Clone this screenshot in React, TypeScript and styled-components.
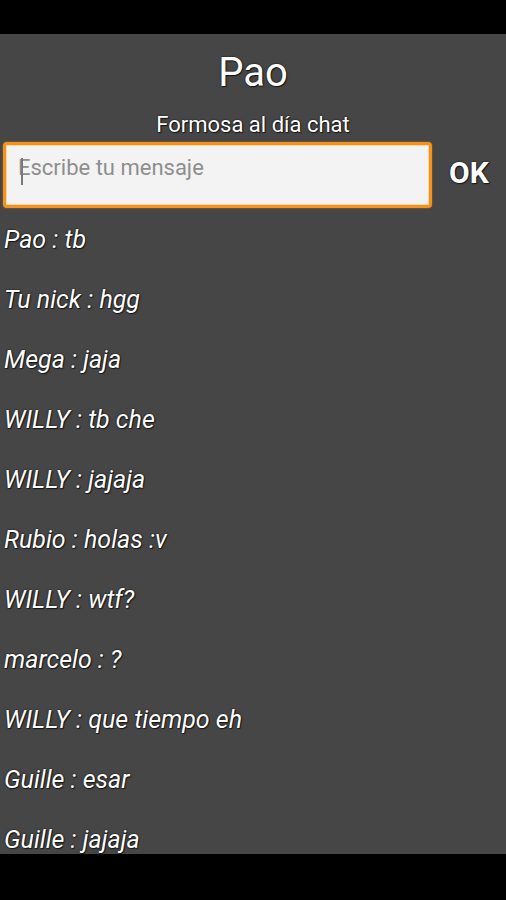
import * as React from "react";
import styled, { createGlobalStyle } from "styled-components";

const GlobalStyle = createGlobalStyle`
  html, body {
    margin: 0;
    padding: 0;
    background: #000;
  }
  * {
    box-sizing: border-box;
  }
`;

const Screen = styled.div`
  width: 506px;
  height: 900px;
  display: flex;
  flex-direction: column;
  background: #000;
  font-family: Roboto, "Noto Sans", sans-serif;
  overflow: hidden;
`;

const StatusBar = styled.div`
  height: 34px;
  flex: none;
  background: #000;
`;

const NavBar = styled.div`
  height: 46px;
  flex: none;
  background: #000;
`;

const Content = styled.main`
  flex: 1;
  background: #464646;
  display: flex;
  flex-direction: column;
  overflow: hidden;
  color: #fff;
  text-shadow: 0 0 2px rgba(0, 0, 0, 0.9), 1px 1px 1px rgba(0, 0, 0, 0.6);
`;

const Title = styled.h1`
  margin: 19px 0 0;
  font-size: 40px;
  line-height: 40px;
  font-weight: 400;
  text-align: center;
`;

const Subtitle = styled.h2`
  margin: 21px 0 0;
  font-size: 22px;
  line-height: 22px;
  font-weight: 400;
  text-align: center;
`;

const Composer = styled.form`
  margin: 6px 0 0 3px;
  display: flex;
  align-items: center;
`;

const InputWrap = styled.div`
  position: relative;
  width: 429px;
  height: 66px;
`;

const MessageInput = styled.textarea`
  width: 100%;
  height: 100%;
  resize: none;
  border: 3px solid #f5921e;
  border-radius: 4px;
  background: #f3f3f3;
  box-shadow: inset 0 0 0 1px #fbd7a6, 0 0 2px rgba(245, 146, 30, 0.6);
  padding: 10px 12px;
  font: inherit;
  font-size: 22px;
  line-height: 26px;
  color: #333;
  outline: none;
  text-shadow: none;

  &::placeholder {
    color: #8e8e8e;
  }
`;

const Caret = styled.span`
  position: absolute;
  left: 18px;
  top: 16px;
  width: 2px;
  height: 27px;
  background: #7a7a7a;
`;

const SendButton = styled.button`
  flex: 1;
  background: none;
  border: 0;
  padding: 0 0 6px;
  font: inherit;
  font-size: 30px;
  font-weight: 700;
  color: #fff;
  text-shadow: inherit;
  text-align: center;
  cursor: pointer;
`;

const MessageList = styled.ul`
  list-style: none;
  margin: 2px 0 0;
  padding: 0 0 0 4px;
`;

const Message = styled.li`
  height: 60px;
  font-size: 25px;
  line-height: 60px;
  font-style: italic;
  white-space: nowrap;
`;

const messages = [
  { nick: "Pao", text: "tb" },
  { nick: "Tu nick", text: "hgg" },
  { nick: "Mega", text: "jaja" },
  { nick: "WILLY", text: "tb che" },
  { nick: "WILLY", text: "jajaja" },
  { nick: "Rubio", text: "holas :v" },
  { nick: "WILLY", text: "wtf?" },
  { nick: "marcelo", text: "?" },
  { nick: "WILLY", text: "que tiempo eh" },
  { nick: "Guille", text: "esar" },
  { nick: "Guille", text: "jajaja" },
];

function App() {
  return (
    <>
      <GlobalStyle />
      <Screen>
        <StatusBar />
        <Content>
          <Title>Pao</Title>
          <Subtitle>Formosa al día chat</Subtitle>
          <Composer
            onSubmit={(event) => {
              event.preventDefault();
            }}
          >
            <InputWrap>
              <MessageInput placeholder="Escribe tu mensaje" />
              <Caret />
            </InputWrap>
            <SendButton type="submit">OK</SendButton>
          </Composer>
          <MessageList>
            {messages.map((m, i) => (
              <Message key={i}>
                {m.nick} : {m.text}
              </Message>
            ))}
          </MessageList>
        </Content>
        <NavBar />
      </Screen>
    </>
  );
}

export default App;
